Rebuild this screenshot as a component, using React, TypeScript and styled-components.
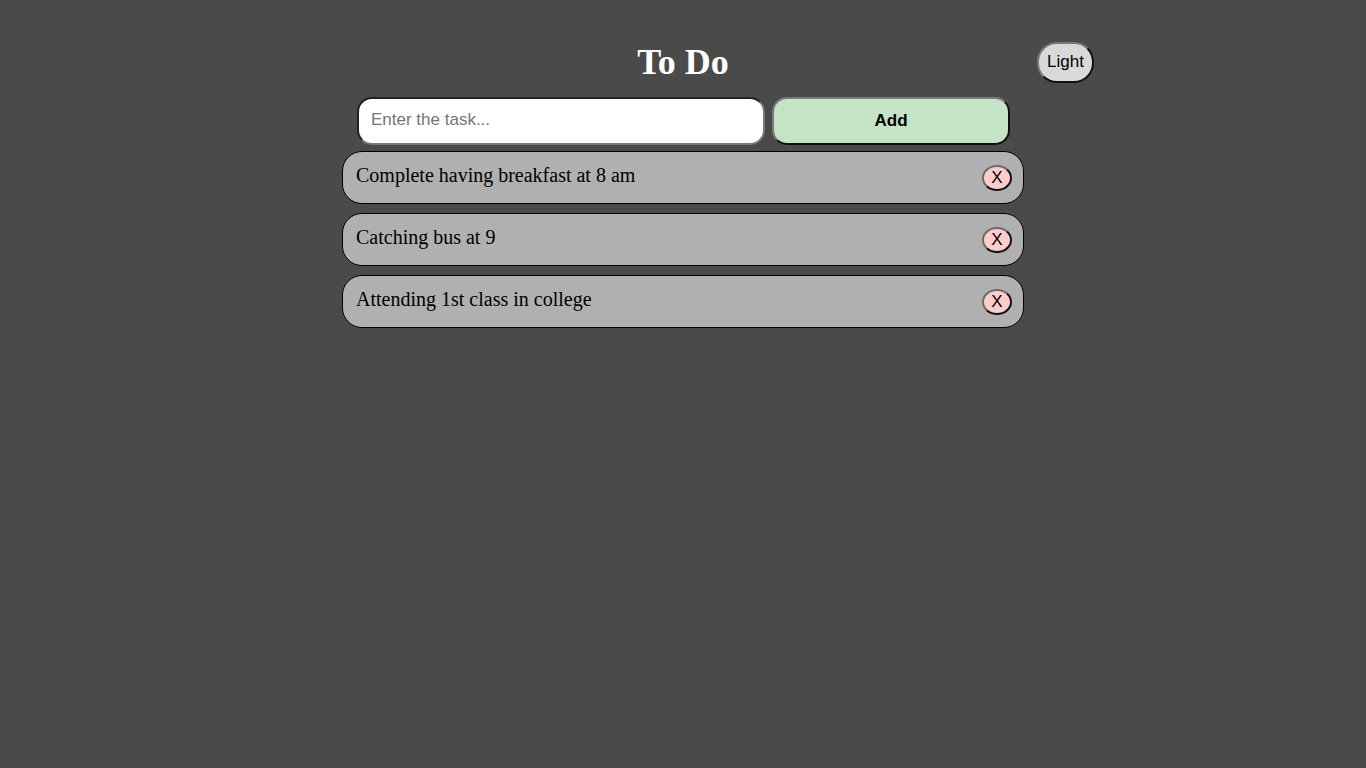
import * as React from 'react';
import styled, { createGlobalStyle } from 'styled-components';

const GlobalStyle = createGlobalStyle`
  html, body {
    margin: 0;
    padding: 0;
    background: #4a4a4a;
    min-height: 100%;
  }

  body {
    font-family: "Liberation Serif", "Times New Roman", serif;
  }
`;

const Page = styled.div`
  display: grid;
  grid-template-columns: 1fr 682px 1fr;
  padding-top: 42px;
  min-height: 100vh;
  box-sizing: border-box;
  align-content: start;
`;

const Title = styled.h1`
  grid-column: 2;
  margin: 0;
  height: 40px;
  display: flex;
  align-items: center;
  justify-content: center;
  color: #ffffff;
  font-family: "Liberation Serif", "Times New Roman", serif;
  font-size: 36px;
  font-weight: bold;
`;

const ThemeCell = styled.div`
  grid-column: 3;
  padding-left: 13px;
`;

const ThemeButton = styled.button`
  height: 41px;
  width: 57px;
  padding: 0 0 2px;
  border-radius: 20px;
  border-width: 2px;
  border-style: solid;
  border-color: #7a7a7a #111 #111 #7a7a7a;
  background: #d9d9d9;
  color: #000;
  font-family: "Liberation Sans", Arial, sans-serif;
  font-size: 17px;
  cursor: pointer;
`;

const Main = styled.div`
  grid-column: 2;
  display: flex;
  flex-direction: column;
  padding-top: 14px;
`;

const Form = styled.form`
  display: flex;
  gap: 7px;
  padding: 0 14px 0 15px;
  margin: 0 0 6px;
`;

const TaskInput = styled.input`
  box-sizing: border-box;
  width: 408px;
  height: 48px;
  padding: 0 12px 2px;
  border-radius: 15px;
  border-width: 2px;
  border-style: solid;
  border-color: #222 #7a7a7a #7a7a7a #222;
  background: #fff;
  font-family: "Liberation Sans", Arial, sans-serif;
  font-size: 17px;
  outline: none;

  &::placeholder {
    color: #757575;
  }
`;

const AddButton = styled.button`
  flex: 1;
  height: 48px;
  padding-bottom: 2px;
  border-radius: 15px;
  border-width: 2px;
  border-style: solid;
  border-color: #7a7a7a #111 #111 #7a7a7a;
  background: #c5e4c5;
  color: #000;
  font-family: "Liberation Sans", Arial, sans-serif;
  font-size: 17px;
  font-weight: bold;
  cursor: pointer;
`;

const List = styled.ul`
  list-style: none;
  margin: 0;
  padding: 0;
  display: flex;
  flex-direction: column;
  gap: 9px;
`;

const Item = styled.li`
  box-sizing: border-box;
  height: 53px;
  display: flex;
  align-items: center;
  justify-content: space-between;
  padding: 0 11px 0 13px;
  border: 1px solid #000;
  border-radius: 20px;
  background: #b0b0b0;
  color: #000;
  font-family: "Liberation Serif", "Times New Roman", serif;
  font-size: 20px;
`;

const ItemText = styled.span`
  margin-top: -4px;
`;

const RemoveButton = styled.button`
  box-sizing: border-box;
  width: 30px;
  height: 26px;
  padding: 0;
  border-radius: 50%;
  border-width: 2px;
  border-style: solid;
  border-color: #6a6a6a #111 #111 #6a6a6a;
  background: #ffcccc;
  color: #000;
  font-family: "Liberation Sans", Arial, sans-serif;
  font-size: 17px;
  line-height: 1;
  cursor: pointer;
`;

const initialTasks = [
  'Complete having breakfast at 8 am',
  'Catching bus at 9',
  'Attending 1st class in college',
];

const App = () => {
  const [tasks, setTasks] = React.useState<string[]>(initialTasks);
  const [text, setText] = React.useState('');

  const add = (e: React.FormEvent) => {
    e.preventDefault();
    if (!text.trim()) return;
    setTasks([...tasks, text.trim()]);
    setText('');
  };

  return (
    <>
      <GlobalStyle />
      <Page>
        <Title>To Do</Title>
        <ThemeCell>
          <ThemeButton type="button">Light</ThemeButton>
        </ThemeCell>
        <Main>
          <Form onSubmit={add}>
            <TaskInput
              placeholder="Enter the task..."
              value={text}
              onChange={e => setText(e.target.value)}
            />
            <AddButton type="submit">Add</AddButton>
          </Form>
          <List>
            {tasks.map((task, i) => (
              <Item key={task + i}>
                <ItemText>{task}</ItemText>
                <RemoveButton type="button" onClick={() => setTasks(tasks.filter((_, j) => j !== i))}>
                  X
                </RemoveButton>
              </Item>
            ))}
          </List>
        </Main>
      </Page>
    </>
  );
};

export default App;
